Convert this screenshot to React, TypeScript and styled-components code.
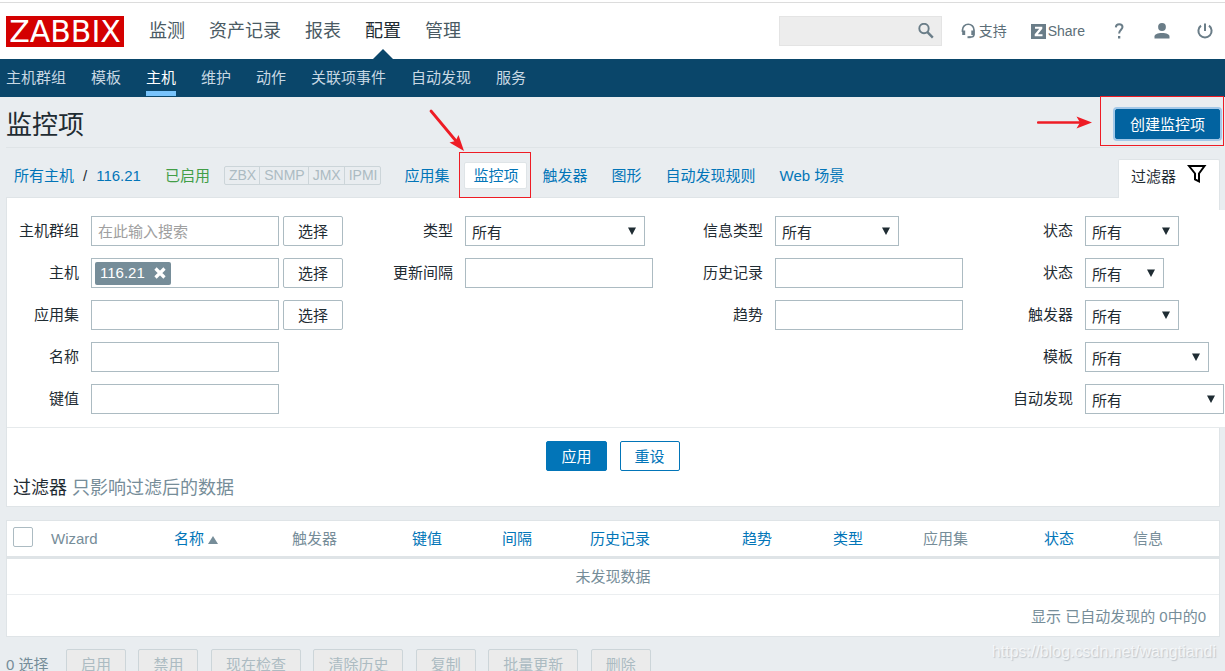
import React from "react";
import styled, { createGlobalStyle } from "styled-components";

const GlobalStyle = createGlobalStyle`
  *, *::before, *::after { box-sizing: border-box; }
  body { margin: 0; background: #e9edf0; }
  body, button, input, select {
    font-family: "Liberation Sans", Arial, "Noto Sans CJK SC", sans-serif;
    font-size: 15px;
    color: #1f2c33;
  }
  a { color: #0275b8; text-decoration: none; }
`;

const Page = styled.div`
  position: relative;
  height: 100vh;
  overflow: hidden;
  line-height: 20px;
`;

const Header = styled.header`
  background: #fff;
  padding-top: 2px;
`;

const HeaderInner = styled.div`
  display: flex;
  align-items: center;
  height: 57px;
  padding: 0 12px 0 6px;
  border-top: 1px solid #dcdcdc;
`;

const Logo = styled.a`
  display: flex;
  align-items: center;
  justify-content: center;
  width: 118px;
  height: 31px;
  background: #d40000;
  font-family: "DejaVu Sans", Verdana, sans-serif;
  font-size: 30px;
  line-height: 31px;
  color: #fff;
`;

const MainNav = styled.nav`
  display: flex;
  gap: 24px;
  margin-left: 25px;
  align-self: stretch;
`;

const MainLink = styled.a<{ $active?: boolean }>`
  position: relative;
  display: flex;
  align-items: center;
  font-size: 18px;
  color: ${(p) => (p.$active ? "#1f2c33" : "#4a5a63")};
  &::after {
    content: "";
    display: ${(p) => (p.$active ? "block" : "none")};
    position: absolute;
    bottom: 0;
    left: 50%;
    margin-left: -10px;
    border: 10px solid transparent;
    border-top: 0;
    border-bottom-color: #0a466a;
  }
`;

const Tools = styled.div`
  display: flex;
  align-items: center;
  gap: 27px;
  margin-left: auto;
`;

const Search = styled.form`
  display: flex;
  align-items: center;
  width: 163px;
  height: 30px;
  padding-right: 7px;
  margin-right: -8px;
  background: #ededed;
  border: 1px solid #e4e4e4;
`;

const SearchInput = styled.input`
  flex: 1;
  min-width: 0;
  height: 28px;
  border: 0;
  background: transparent;
`;

const IconButton = styled.button`
  display: block;
  padding: 0;
  border: 0;
  background: none;
  line-height: 0;
  color: #6a7d88;
`;

const ToolLink = styled.a<{ $gap: number }>`
  display: flex;
  align-items: center;
  gap: ${(p) => p.$gap}px;
  font-size: 14px;
  color: #5c6e78;
  svg { color: #6a7d88; }
`;

const LinkGroup = styled.div`
  display: flex;
  gap: 24px;
  margin-right: -1px;
`;

const SubNav = styled.nav`
  display: flex;
  gap: 25px;
  height: 38px;
  padding: 0 6px 1px;
  background: #0a466a;
`;

const SubLink = styled.a<{ $active?: boolean }>`
  display: flex;
  align-items: center;
  padding-top: 5px;
  border-bottom: 5px solid ${(p) => (p.$active ? "#78c3fb" : "transparent")};
  color: ${(p) => (p.$active ? "#fff" : "#c8d8e3")};
`;

const Main = styled.main`
  padding: 0 5px 0 6px;
`;

const TitleRow = styled.div`
  display: flex;
  align-items: center;
  justify-content: space-between;
  padding: 12px 0 8px;
  border-bottom: 1px solid #dfe4e7;
`;

const Title = styled.h1`
  margin: 0;
  padding-top: 2px;
  font-size: 26px;
  font-weight: 400;
  line-height: 28px;
`;

const Annotated = styled.span`
  position: relative;
  display: block;
`;

const RedBox = styled.span<{ $inset: string }>`
  position: absolute;
  inset: ${(p) => p.$inset};
  border: 1px solid #ee1c25;
  pointer-events: none;
`;

const RedArrow = styled.svg<{ $left: number; $top: number }>`
  position: absolute;
  left: ${(p) => p.$left}px;
  top: ${(p) => p.$top}px;
  pointer-events: none;
`;

type Variant = "plain" | "primary" | "outline" | "focused" | "disabled";
const variants: Record<Variant, string> = {
  plain: "background:#fff;border-color:#acbbc2;color:#1f2c33;",
  primary: "background:#0275b8;border-color:#0275b8;color:#fff;",
  outline: "background:#fff;border-color:#0275b8;color:#0275b8;",
  focused: "background:#0263a0;border-color:#0263a0;color:#fff;box-shadow:0 0 0 2px #a3c8e8;",
  disabled: "padding-top:0;background:#ebebeb;border-color:#ccd5d9;color:#acbbc2;",
};

const Button = styled.button<{ $variant: Variant }>`
  height: 30px;
  padding: 1px 14px 0;
  border: 1px solid;
  border-radius: 2px;
  line-height: 27px;
  white-space: nowrap;
  ${(p) => variants[p.$variant]}
`;

const TabsRow = styled.div`
  display: flex;
  align-items: flex-end;
  justify-content: space-between;
  height: 49px;
`;

const Tabs = styled.nav`
  display: flex;
  align-items: center;
  height: 43px;
  padding-left: 8px;
  white-space: nowrap;
`;

const Crumbs = styled.div`
  display: flex;
  gap: 9px;
  margin-right: 24px;
`;

const Enabled = styled.span`
  margin-right: 14px;
  color: #429e47;
`;

const Interfaces = styled.div`
  display: flex;
  margin-right: 23px;
  border: 1px solid #ccd5d9;
  border-radius: 2px;
  font-size: 14px;
  line-height: 17px;
  color: #acbbc2;
`;

const Interface = styled.span`
  padding: 0 3px 0 4px;
  & + & { border-left: 1px solid #ccd5d9; }
`;

const TabLinks = styled.div`
  display: flex;
  align-items: center;
  gap: 24px;
`;

const ActiveTab = styled.a`
  display: block;
  margin: 0 -9px;
  padding: 2px 8px;
  background: #fff;
  border: 1px solid #dfe4e7;
  border-radius: 2px;
  line-height: 21px;
`;

const FilterTab = styled.button`
  position: relative;
  display: flex;
  align-items: center;
  gap: 11px;
  height: 39px;
  margin-bottom: -1px;
  padding: 0 12px 8px;
  background: #fff;
  border: 1px solid #dfe4e7;
  border-bottom: 0;
  border-radius: 2px 2px 0 0;
  svg { margin-bottom: 3px; }
`;

const FilterPanel = styled.form`
  padding-top: 12px;
  background: #fff;
  border: 1px solid #dfe4e7;
`;

const Fields = styled.div`
  display: grid;
  grid-template-columns: 348fr 310fr 310fr 250fr;
  margin-right: -6px;
  padding: 6px 0 13px;
  background: #fff;
  border-bottom: 1px solid #e6eaec;
`;

const FieldColumn = styled.div<{ $label: number }>`
  display: grid;
  grid-template-columns: ${(p) => p.$label}px auto;
  grid-auto-rows: 30px;
  align-content: start;
  justify-content: start;
  gap: 12px;
`;

const Label = styled.label`
  text-align: right;
  line-height: 30px;
  white-space: nowrap;
`;

const Control = styled.div`
  display: flex;
  gap: 4px;
`;

const TextInput = styled.input`
  width: 188px;
  height: 30px;
  padding: 0 6px;
  border: 1px solid #acbbc2;
  background: #fff;
  &::placeholder { color: #a0a0a0; opacity: 1; }
`;

const MultiSelect = styled.div`
  display: flex;
  align-items: center;
  width: 188px;
  height: 30px;
  padding: 0 3px;
  border: 1px solid #acbbc2;
  background: #fff;
`;

const Tag = styled.span`
  display: flex;
  align-items: center;
  gap: 9px;
  height: 23px;
  padding: 0 5px;
  border-radius: 2px;
  background: #768d99;
  color: #fff;
  button { color: #fff; }
`;

const TagInput = styled.input`
  flex: 1;
  min-width: 0;
  border: 0;
`;

const SelectWrap = styled.span<{ $width: number }>`
  position: relative;
  display: block;
  width: ${(p) => p.$width}px;
  svg {
    position: absolute;
    right: 9px;
    top: 11px;
    pointer-events: none;
  }
`;

const NativeSelect = styled.select`
  width: 100%;
  height: 30px;
  padding: 2px 6px 0;
  border: 1px solid #acbbc2;
  border-radius: 0;
  background: #fff;
  appearance: none;
`;

const FilterActions = styled.div`
  display: flex;
  justify-content: center;
  gap: 13px;
  padding: 13px 0 6px;
`;

const FilterHint = styled.p`
  margin: 0;
  padding: 0 6px 7px;
  font-size: 18px;
  line-height: 22px;
  color: #768d99;
  strong { font-weight: 400; color: #1f2c33; }
`;

const Table = styled.table`
  width: 100%;
  margin-top: 13px;
  table-layout: fixed;
  border-collapse: separate;
  border-spacing: 0;
  background: #fff;
  border: 1px solid #dfe4e7;
  color: #768d99;
  th, td { padding: 0 6px; }
  th {
    height: 38px;
    border-bottom: 3px solid #dfe4e7;
    font-weight: 400;
    text-align: left;
    white-space: nowrap;
  }
  td { height: 36px; text-align: center; border-bottom: 1px solid #ebeef0; }
  tfoot td { height: 41px; padding: 2px 13px 0; text-align: right; border-bottom: 0; }
`;

const Checkbox = styled.input`
  display: block;
  width: 20px;
  height: 20px;
  margin: 0 0 3px;
  border: 1px solid #acbbc2;
  border-radius: 2px;
  background: #fff;
  appearance: none;
`;

const SortArrow = styled.span`
  display: inline-block;
  margin-left: 4px;
  border: 5px solid transparent;
  border-top: 0;
  border-bottom: 8px solid #768d99;
`;

const BulkBar = styled.div`
  margin-top: 12px;
  font-size: 16px;
  white-space: nowrap;
  color: #768d99;
  button { margin-right: 8px; }
`;

const Selected = styled.span`
  margin-right: 13px;
  font-size: 15px;
`;

const Watermark = styled.div`
  position: absolute;
  right: 9px;
  bottom: 9px;
  font-size: 16px;
  color: rgba(255, 255, 255, 0.7);
  text-shadow: 1px 1px 1px rgba(120, 130, 138, 0.35);
`;

const Select = ({ id, width }: { id: string; width: number }) => (
  <SelectWrap $width={width}>
    <NativeSelect id={id}>
      <option>所有</option>
    </NativeSelect>
    <svg width="8" height="8" viewBox="0 0 8 8" aria-hidden="true">
      <path d="M0 0.5h8L4 8z" fill="#1f2c33" />
    </svg>
  </SelectWrap>
);

const Field = ({ id, label, children }: { id: string; label: string; children: React.ReactNode }) => (
  <>
    <Label htmlFor={id}>{label}</Label>
    <Control>{children}</Control>
  </>
);

const columns: { label: string; width: number; link?: boolean; sorted?: boolean }[] = [
  { label: "Wizard", width: 123 },
  { label: "名称", width: 118, link: true, sorted: true },
  { label: "触发器", width: 120 },
  { label: "键值", width: 90, link: true },
  { label: "间隔", width: 88, link: true },
  { label: "历史记录", width: 152, link: true },
  { label: "趋势", width: 91, link: true },
  { label: "类型", width: 90, link: true },
  { label: "应用集", width: 121 },
  { label: "状态", width: 89, link: true },
  { label: "信息", width: 92 },
];

const mainItems = ["监测", "资产记录", "报表", "配置", "管理"];
const subItems = ["主机群组", "模板", "主机", "维护", "动作", "关联项事件", "自动发现", "服务"];
const bulkActions = ["启用", "禁用", "现在检查", "清除历史", "复制", "批量更新", "删除"];

export default function App() {
  return (
    <Page>
      <GlobalStyle />
      <Header>
        <HeaderInner>
          <Logo href="#">ZABBIX</Logo>
          <MainNav>
            {mainItems.map((item) => (
              <MainLink key={item} href="#" $active={item === "配置"}>{item}</MainLink>
            ))}
          </MainNav>
          <Tools>
            <Search>
              <SearchInput type="text" aria-label="搜索" />
              <IconButton type="button" aria-label="搜索">
                <svg width="16" height="16" viewBox="0 0 16 16" fill="none" stroke="currentColor">
                  <circle cx="6" cy="5.500" r="4.700" strokeWidth="1.900" />
                  <path d="M9.200 8.800l5.600 5.800" strokeWidth="2.400" />
                </svg>
              </IconButton>
            </Search>
            <LinkGroup>
              <ToolLink href="#" $gap={3}>
                <svg width="15" height="16" viewBox="0 0 15 16" fill="none" stroke="currentColor">
                  <path d="M1.500 9V7a5.700 5.700 0 0 1 11.500 0v4.500c0 2-1.500 2.700-4.500 2.700" strokeWidth="1.700" />
                  <path d="M2.700 7.500v4.500M11.800 7.500v4.500" strokeWidth="3" />
                  <path d="M6.500 14.200h3" strokeWidth="2" />
                </svg>
                支持
              </ToolLink>
              <ToolLink href="#" $gap={2}>
                <svg width="15" height="15" viewBox="0 0 15 15">
                  <rect width="15" height="15" fill="currentColor" />
                  <path d="M4 2.800h7.300v2L6.800 10.200h4.700v2H3.700v-2L8.300 4.800H4z" fill="#fff" />
                </svg>
                Share
              </ToolLink>
            </LinkGroup>
            <IconButton type="button" aria-label="帮助">
              <svg width="16" height="16" viewBox="0 0 16 16" fill="none" stroke="currentColor">
                <path d="M4.800 4.400C5 2.200 6.300 1.200 8.200 1.200c2 0 3.300 1.200 3.300 2.900C11.500 6.600 8.100 7 8.100 10.500" strokeWidth="2" />
                <path d="M7 13h2.300v2.500H7z" fill="currentColor" stroke="none" />
              </svg>
            </IconButton>
            <IconButton type="button" aria-label="用户">
              <svg width="16" height="16" viewBox="0 0 16 16" fill="currentColor">
                <circle cx="8" cy="4" r="3.900" />
                <path d="M0.500 15.500v-2c0-2.200 3-3.600 7.500-3.600s7.500 1.400 7.500 3.600v2z" />
              </svg>
            </IconButton>
            <IconButton type="button" aria-label="退出">
              <svg width="16" height="16" viewBox="0 0 16 16" fill="none" stroke="currentColor" strokeWidth="2">
                <path d="M4 2.600a6.600 6.600 0 1 0 8 0M8 0.500v7.500" />
              </svg>
            </IconButton>
          </Tools>
        </HeaderInner>
      </Header>
      <SubNav>
        {subItems.map((item) => (
          <SubLink key={item} href="#" $active={item === "主机"}>{item}</SubLink>
        ))}
      </SubNav>

      <Main>
        <TitleRow>
          <Title>监控项</Title>
          <Annotated>
            <Button type="button" $variant="focused">创建监控项</Button>
            <RedBox $inset="-13px -4px -7px -15px" />
            <RedArrow $left={-78} $top={7} width="56" height="13" viewBox="0 0 56 13">
              <path d="M1 6.500h42" stroke="#ee1c25" strokeWidth="2.500" strokeLinecap="round" />
              <path d="M55 6.500L39.500 0.500l3.500 6-3.500 6z" fill="#ee1c25" />
            </RedArrow>
          </Annotated>
        </TitleRow>

        <TabsRow>
          <Tabs>
            <Crumbs>
              <a href="#">所有主机</a>
              <span>/</span>
              <a href="#">116.21</a>
            </Crumbs>
            <Enabled>已启用</Enabled>
            <Interfaces>
              {["ZBX", "SNMP", "JMX", "IPMI"].map((name) => (
                <Interface key={name}>{name}</Interface>
              ))}
            </Interfaces>
            <TabLinks>
              <a href="#">应用集</a>
              <Annotated>
                <ActiveTab href="#">监控项</ActiveTab>
                <RedBox $inset="-10px -13px -9px -14px" />
                <RedArrow $left={-44} $top={-53} width="36" height="43" viewBox="0 0 36 43">
                  <path d="M2 2l25 30" stroke="#ee1c25" strokeWidth="2.800" strokeLinecap="round" />
                  <path d="M35 42L20.500 33.500l6-1.500 3-6z" fill="#ee1c25" />
                </RedArrow>
              </Annotated>
              <a href="#">触发器</a>
              <a href="#">图形</a>
              <a href="#">自动发现规则</a>
              <a href="#">Web 场景</a>
            </TabLinks>
          </Tabs>
          <FilterTab type="button">
            过滤器
            <svg width="20" height="19" viewBox="0 0 20 19" fill="none" stroke="#000" strokeWidth="2">
              <path d="M2 2h15.500L12 9.500v7.800l-4-2V9.500z" />
            </svg>
          </FilterTab>
        </TabsRow>

        <FilterPanel>
          <Fields>
            <FieldColumn $label={72}>
              <Field id="groups" label="主机群组">
                <TextInput id="groups" type="text" placeholder="在此输入搜索" />
                <Button type="button" $variant="plain">选择</Button>
              </Field>
              <Field id="hosts" label="主机">
                <MultiSelect>
                  <Tag>
                    116.21
                    <IconButton type="button" aria-label="移除">
                      <svg width="12" height="12" viewBox="0 0 12 12" stroke="currentColor" strokeWidth="3.200">
                        <path d="M1.500 1.500l9 9M10.500 1.500l-9 9" />
                      </svg>
                    </IconButton>
                  </Tag>
                  <TagInput id="hosts" type="text" />
                </MultiSelect>
                <Button type="button" $variant="plain">选择</Button>
              </Field>
              <Field id="app" label="应用集">
                <TextInput id="app" type="text" />
                <Button type="button" $variant="plain">选择</Button>
              </Field>
              <Field id="name" label="名称"><TextInput id="name" type="text" /></Field>
              <Field id="key" label="键值"><TextInput id="key" type="text" /></Field>
            </FieldColumn>
            <FieldColumn $label={98}>
              <Field id="type" label="类型"><Select id="type" width={180} /></Field>
              <Field id="interval" label="更新间隔"><TextInput id="interval" type="text" /></Field>
            </FieldColumn>
            <FieldColumn $label={98}>
              <Field id="info" label="信息类型"><Select id="info" width={124} /></Field>
              <Field id="history" label="历史记录"><TextInput id="history" type="text" /></Field>
              <Field id="trends" label="趋势"><TextInput id="trends" type="text" /></Field>
            </FieldColumn>
            <FieldColumn $label={98}>
              <Field id="state" label="状态"><Select id="state" width={94} /></Field>
              <Field id="status" label="状态"><Select id="status" width={79} /></Field>
              <Field id="triggers" label="触发器"><Select id="triggers" width={94} /></Field>
              <Field id="template" label="模板"><Select id="template" width={124} /></Field>
              <Field id="discovery" label="自动发现"><Select id="discovery" width={139} /></Field>
            </FieldColumn>
          </Fields>
          <FilterActions>
            <Button type="button" $variant="primary">应用</Button>
            <Button type="button" $variant="outline">重设</Button>
          </FilterActions>
          <FilterHint><strong>过滤器</strong> 只影响过滤后的数据</FilterHint>
        </FilterPanel>

        <Table>
          <colgroup>
            <col width={38} />
            {columns.map((c) => <col key={c.label} width={c.width} />)}
          </colgroup>
          <thead>
            <tr>
              <th><Checkbox type="checkbox" aria-label="全选" /></th>
              {columns.map((c) => (
                <th key={c.label}>
                  {c.link ? <a href="#">{c.label}</a> : c.label}
                  {c.sorted && <SortArrow />}
                </th>
              ))}
            </tr>
          </thead>
          <tbody>
            <tr><td colSpan={12}>未发现数据</td></tr>
          </tbody>
          <tfoot>
            <tr><td colSpan={12}>显示 已自动发现的 0中的0</td></tr>
          </tfoot>
        </Table>

        <BulkBar>
          <Selected>0 选择</Selected>{" "}
          {bulkActions.map((action) => (
            <React.Fragment key={action}>
              <Button type="button" $variant="disabled" disabled>{action}</Button>{" "}
            </React.Fragment>
          ))}
        </BulkBar>
      </Main>
      <Watermark>https://blog.csdn.net/wangtiandi</Watermark>
    </Page>
  );
}
